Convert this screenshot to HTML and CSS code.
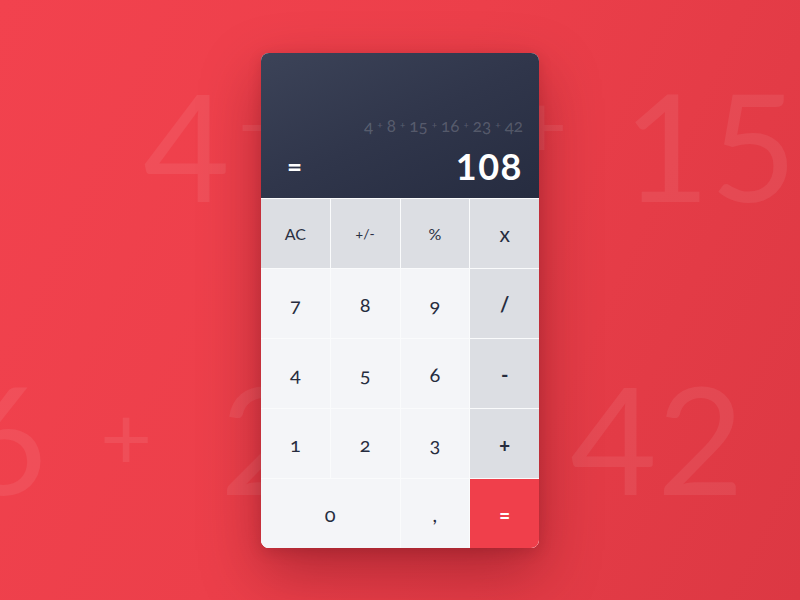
FILE: index.html
```html
<!DOCTYPE html>
<html lang="en">
<head>
<meta charset="utf-8">
<title>Calculator</title>
<link rel="stylesheet" href="styles.css">
</head>
<body>
<div class="stage">
  <div class="backdrop" aria-hidden="true">
    <div class="bg-line bg-line-1">
      <span class="tok t-4">4</span><span class="tok plus p-a">+</span><span class="tok t-8">8</span><span class="tok plus p-b">+</span><span class="tok t-15">15</span>
    </div>
    <div class="bg-line bg-line-2">
      <span class="tok t-16">16</span><span class="tok plus p-c">+</span><span class="tok t-23">23</span><span class="tok plus p-d">+</span><span class="tok t-42">42</span>
    </div>
  </div>

  <div class="calc">
    <div class="display">
      <div class="expr">4<span class="op">+</span>8<span class="op">+</span>15<span class="op">+</span>16<span class="op">+</span>23<span class="op">+</span>42</div>
      <div class="result"><span class="eq">=</span><span class="value">108</span></div>
    </div>
    <div class="keys">
      <div class="key fn">AC</div>
      <div class="key fn small">+/-</div>
      <div class="key fn">%</div>
      <div class="key op times">x</div>

      <div class="key">7</div>
      <div class="key">8</div>
      <div class="key">9</div>
      <div class="key op">/</div>

      <div class="key">4</div>
      <div class="key">5</div>
      <div class="key">6</div>
      <div class="key op">-</div>

      <div class="key">1</div>
      <div class="key">2</div>
      <div class="key">3</div>
      <div class="key op">+</div>

      <div class="key zero">0</div>
      <div class="key">,</div>
      <div class="key equals">=</div>
    </div>
  </div>
</div>
</body>
</html>
```

FILE: styles.css
```css
* { box-sizing: border-box; }

html, body {
  margin: 0;
  padding: 0;
}

body {
  font-family: Lato, "Open Sans", sans-serif;
}

.stage {
  position: relative;
  width: 800px;
  height: 600px;
  overflow: hidden;
  padding-top: 53px;
  display: flex;
  justify-content: center;
  align-items: flex-start;
  background: linear-gradient(115deg, #f2424e 0%, #ec3f4a 45%, #dc3843 100%);
}

/* decorative numbers behind the calculator */
.backdrop {
  position: absolute;
  inset: 0;
  color: rgba(255, 255, 255, 0.075);
  font-weight: 400;
  font-size: 150px;
  line-height: 150px;
  pointer-events: none;
}

.bg-line {
  position: absolute;
  display: flex;
  align-items: baseline;
  white-space: nowrap;
}

.bg-line-1 { left: 143px; top: 69px; }
.bg-line-2 { left: -127px; top: 362px; }

.tok {
  display: inline-block;
  text-align: center;
  flex: none;
}

.plus {
  font-size: 90px;
  line-height: 90px;
}

.t-4  { width: 77px; }
.p-a  { width: 40px; margin-left: 18px; transform: translateY(-44px); }
.t-8  { width: 80px; margin-left: 52px; }
.p-b  { width: 40px; margin-left: 105px; transform: translateY(-44px); }
.t-15 { width: 155px; margin-left: 68px; }

.t-16 { width: 160px; }
.p-c  { width: 51px; margin-left: 67px; transform: translateY(-25px); }
.t-23 { width: 165px; margin-left: 69px; }
.p-d  { width: 50px; margin-left: 60px; transform: translateY(-25px); }
.t-42 { width: 170px; margin-left: 75px; }

/* calculator card */
.calc {
  position: relative;
  z-index: 1;
  width: 278px;
  border-radius: 8px;
  overflow: hidden;
  background: #fafbfc;
  box-shadow: 0 24px 60px rgba(70, 0, 15, 0.35), 0 4px 14px rgba(70, 0, 15, 0.15);
}

.display {
  height: 145px;
  padding: 0 16px 12px 26px;
  display: flex;
  flex-direction: column;
  justify-content: flex-end;
  background: linear-gradient(155deg, #3c4358 0%, #30364b 50%, #262c40 100%);
}

.expr {
  text-align: right;
  font-size: 17px;
  line-height: 20px;
  color: rgba(255, 255, 255, 0.2);
  margin-bottom: 10px;
  font-variant-numeric: oldstyle-nums;
}

.expr .op {
  font-size: 10px;
  vertical-align: 4px;
  margin: 0 4px;
}

.result {
  height: 40px;
  display: flex;
  justify-content: space-between;
  align-items: center;
  color: #ffffff;
}

.eq {
  font-size: 26px;
  font-weight: 700;
}

.value {
  font-size: 36px;
  font-weight: 700;
  letter-spacing: 1.5px;
}

.keys {
  display: grid;
  grid-template-columns: repeat(4, 1fr);
  grid-auto-rows: 69px;
  gap: 1px;
  padding-top: 1px;
  background: #fafbfc;
}

.key {
  display: flex;
  align-items: center;
  justify-content: center;
  background: #f4f5f8;
  color: #262c3e;
  font-size: 20px;
  font-variant-numeric: oldstyle-nums;
}

.key.fn {
  background: #dcdee3;
  font-size: 16px;
  color: #2b3143;
}

.key.fn.small {
  font-size: 14px;
}

.key.op {
  background: #dcdee3;
  font-weight: 700;
  font-size: 20px;
}

.key.op.times {
  font-weight: 400;
  font-size: 21px;
}

.key.zero {
  grid-column: span 2;
}

.key.equals {
  background: #f03f4b;
  color: #ffffff;
  font-weight: 700;
  font-size: 20px;
}
```
